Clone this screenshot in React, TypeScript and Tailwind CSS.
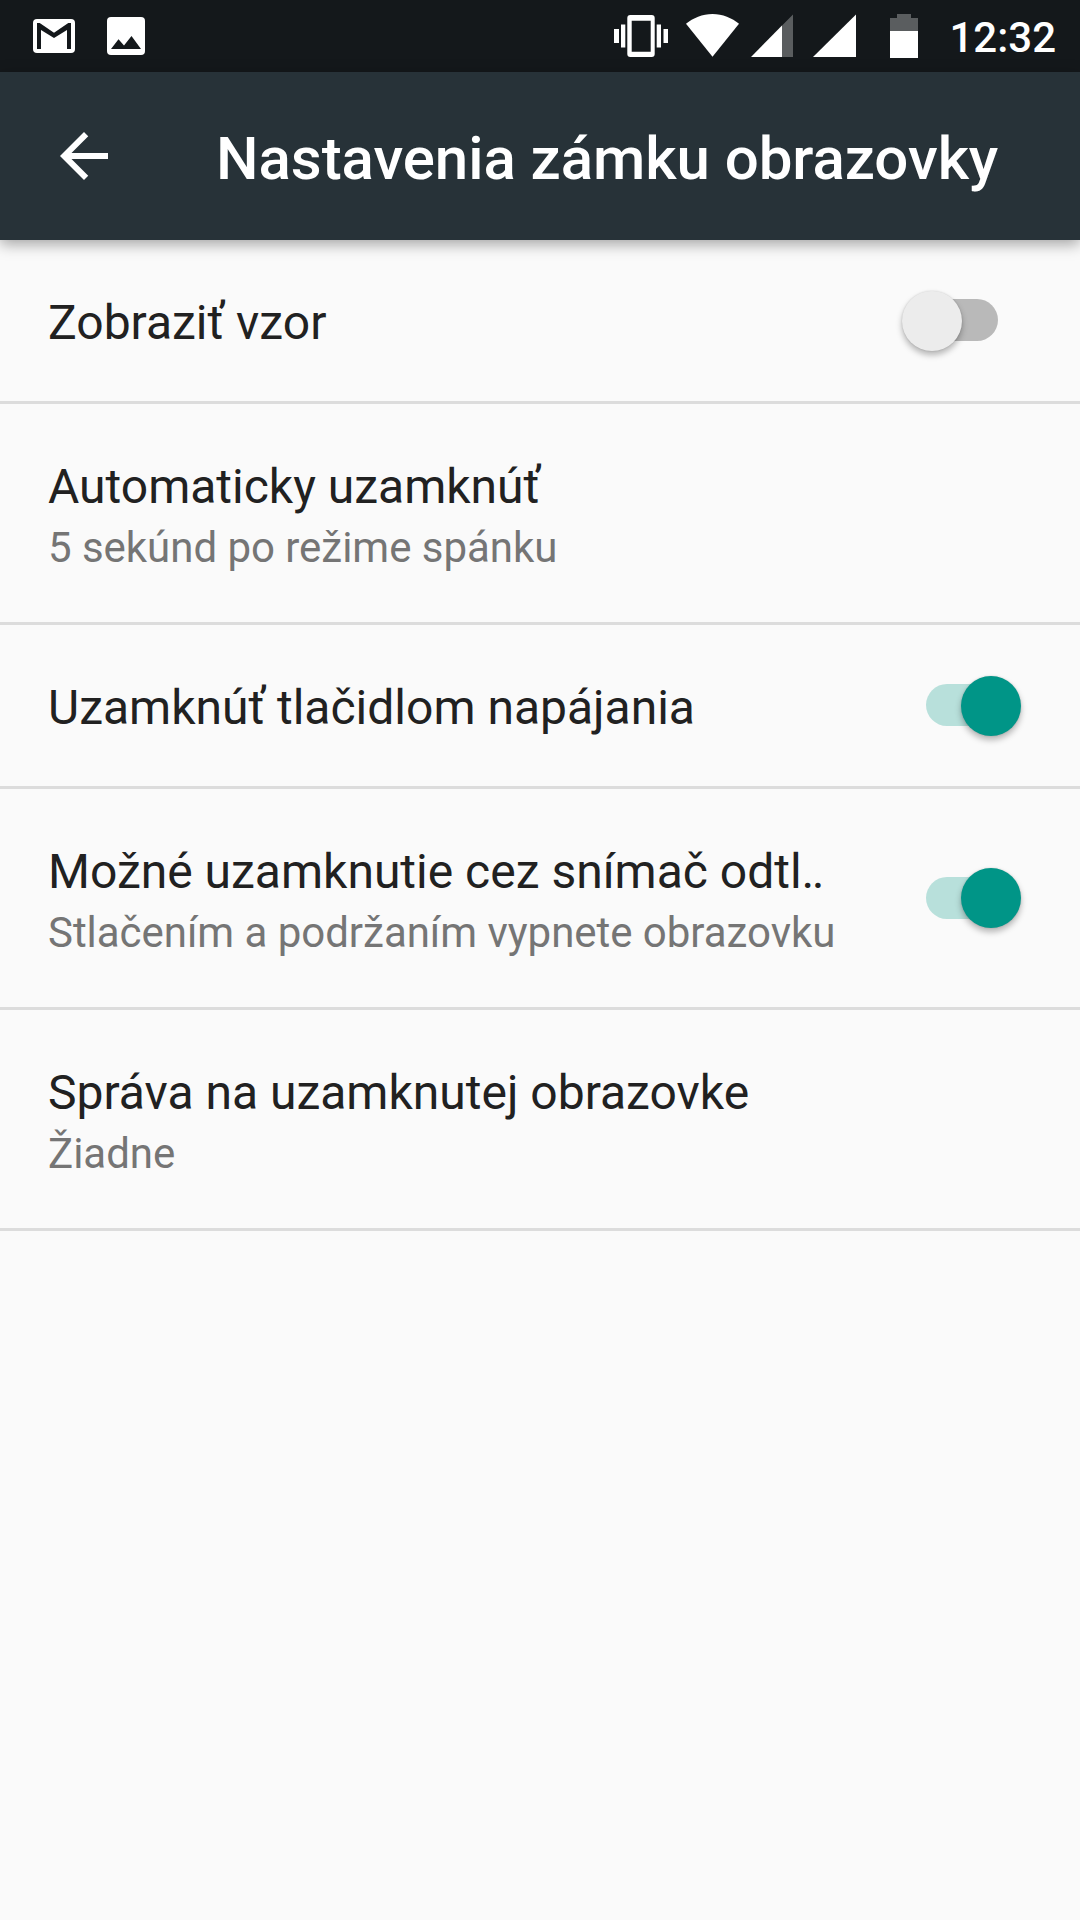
import { useState } from "react";
import clsx from "clsx";

interface Setting {
  id: string;
  title: string;
  summary?: string;
  toggle?: boolean;
}

const SETTINGS: Setting[] = [
  { id: "pattern", title: "Zobraziť vzor", toggle: false },
  { id: "auto-lock", title: "Automaticky uzamknúť", summary: "5 sekúnd po režime spánku" },
  { id: "power-lock", title: "Uzamknúť tlačidlom napájania", toggle: true },
  {
    id: "fingerprint-lock",
    title: "Možné uzamknutie cez snímač odtl‥",
    summary: "Stlačením a podržaním vypnete obrazovku",
    toggle: true,
  },
  { id: "message", title: "Správa na uzamknutej obrazovke", summary: "Žiadne" },
];

function StatusBar() {
  return (
    <div className="flex h-[72px] shrink-0 items-center bg-[#14181b] pr-6 pl-[33px] text-white">
      {/* notifications */}
      <svg className="h-[72px] w-[42px]" viewBox="0 0 42 72">
        <rect y="19" width="42" height="34" rx="4" fill="currentColor" />
        <path d="M4 49V23H6.700L21 32.700 35.300 23H38V49H34V30L21 38 8 30V49Z" fill="#14181b" />
      </svg>
      <svg className="ml-8 h-[72px] w-[38px]" viewBox="0 0 38 72">
        <rect y="17" width="38" height="38" rx="4" fill="currentColor" />
        <path d="M4 49 11.500 39.300 17 45.500 24.500 36 34 49Z" fill="#14181b" />
      </svg>

      {/* system icons */}
      <svg className="ml-auto h-[72px] w-[54px]" viewBox="0 0 54 72" fill="currentColor">
        <path d="M0 29H5V43H0ZM7 24.500H11.300V47.500H7ZM42.700 24.500H47V47.500H42.700ZM49.500 29H54V43H49.500Z" />
        <path
          fillRule="evenodd"
          d="M16.300 15H37.700Q40.700 15 40.700 18V54Q40.700 57 37.700 57H16.300Q13.300 57 13.300 54V18Q13.300 15 16.300 15ZM17.700 20.700V51.700H36.700V20.700Z"
        />
      </svg>
      <svg className="ml-[18px] h-[72px] w-[53px]" viewBox="0 0 53 72" fill="currentColor">
        <path d="M0 23.700C7 18 16.500 14 26.500 14S46 18 53 23.700L26.500 56.700Z" />
      </svg>
      <svg className="ml-3 h-[72px] w-[42px]" viewBox="0 0 42 72" fill="currentColor">
        <path d="M0 57 42 14.500V57H31V25.600Z" fillOpacity=".3" />
        <path d="M0 57 31 25.600V57Z" />
      </svg>
      <svg className="ml-5 h-[72px] w-[43px]" viewBox="0 0 43 72" fill="currentColor">
        <path d="M0 57 43 14.500V57Z" />
      </svg>
      <svg className="ml-[34px] h-[72px] w-7" viewBox="0 0 28 72" fill="currentColor">
        <path d="M0 18H7V14H21V18H28V31H0Z" fillOpacity=".3" />
        <path d="M0 31H28V58H0Z" />
      </svg>
      <span className="ml-[31px] pt-[3px] text-[42px] leading-[50px] font-medium">12:32</span>
    </div>
  );
}

function AppBar() {
  return (
    <header className="z-10 flex h-[168px] shrink-0 items-center bg-[#273238] pl-12 text-white shadow-[0_4px_14px_rgba(0,0,0,0.36)]">
      <button type="button" aria-label="Späť" className="size-[72px]">
        <svg className="size-[72px]" viewBox="0 0 24 24" fill="currentColor">
          <path d="M20 11H7.830l5.590-5.590L12 4l-8 8 8 8 1.410-1.410L7.830 13H20v-2z" />
        </svg>
      </button>
      <h1 className="ml-24 pt-1.5 text-[60px] leading-[70px] font-medium tracking-[-0.05px] whitespace-nowrap">
        Nastavenia zámku obrazovky
      </h1>
    </header>
  );
}

function Toggle({ on, label, onChange }: { on: boolean; label: string; onChange: () => void }) {
  return (
    <button
      type="button"
      role="switch"
      aria-checked={on}
      aria-label={label}
      onClick={onChange}
      className={clsx(
        "relative mb-px h-[42px] w-[72px] shrink-0 rounded-full",
        on ? "bg-[#b8e0db]" : "bg-[#b9b9b9]"
      )}
    >
      <span
        className={clsx(
          "absolute -top-[8.5px] size-[60px] rounded-full shadow-[0_4px_6px_rgba(0,0,0,0.28),0_0_2px_rgba(0,0,0,0.15)]",
          on ? "left-[35px] bg-[#009587]" : "-left-6 bg-[#ececec]"
        )}
      />
    </button>
  );
}

export default function App() {
  const [values, setValues] = useState<Record<string, boolean>>(() =>
    Object.fromEntries(SETTINGS.map((s) => [s.id, !!s.toggle]))
  );

  return (
    <div className="flex h-[1920px] w-[1080px] flex-col overflow-hidden bg-[#fafafa] font-['Roboto',sans-serif]">
      <StatusBar />
      <AppBar />
      <main>
        {SETTINGS.map(({ id, title, summary, toggle }) => (
          <div
            key={id}
            className={clsx(
              "flex items-center justify-between border-b-3 border-[#dcdcdc] pr-[82px] pl-12",
              summary ? "h-[221px]" : "h-[164px]"
            )}
          >
            <div className={clsx("whitespace-nowrap", summary ? "pt-[9px]" : "pt-[5px]")}>
              <div className="text-[48px] leading-[60px] text-[#212121]">{title}</div>
              {summary && (
                <div className="text-[42px] leading-[62px] tracking-[-0.03px] text-[#757575]">{summary}</div>
              )}
            </div>
            {toggle !== undefined && (
              <Toggle
                on={values[id]}
                label={title}
                onChange={() => setValues((v) => ({ ...v, [id]: !v[id] }))}
              />
            )}
          </div>
        ))}
      </main>
    </div>
  );
}
